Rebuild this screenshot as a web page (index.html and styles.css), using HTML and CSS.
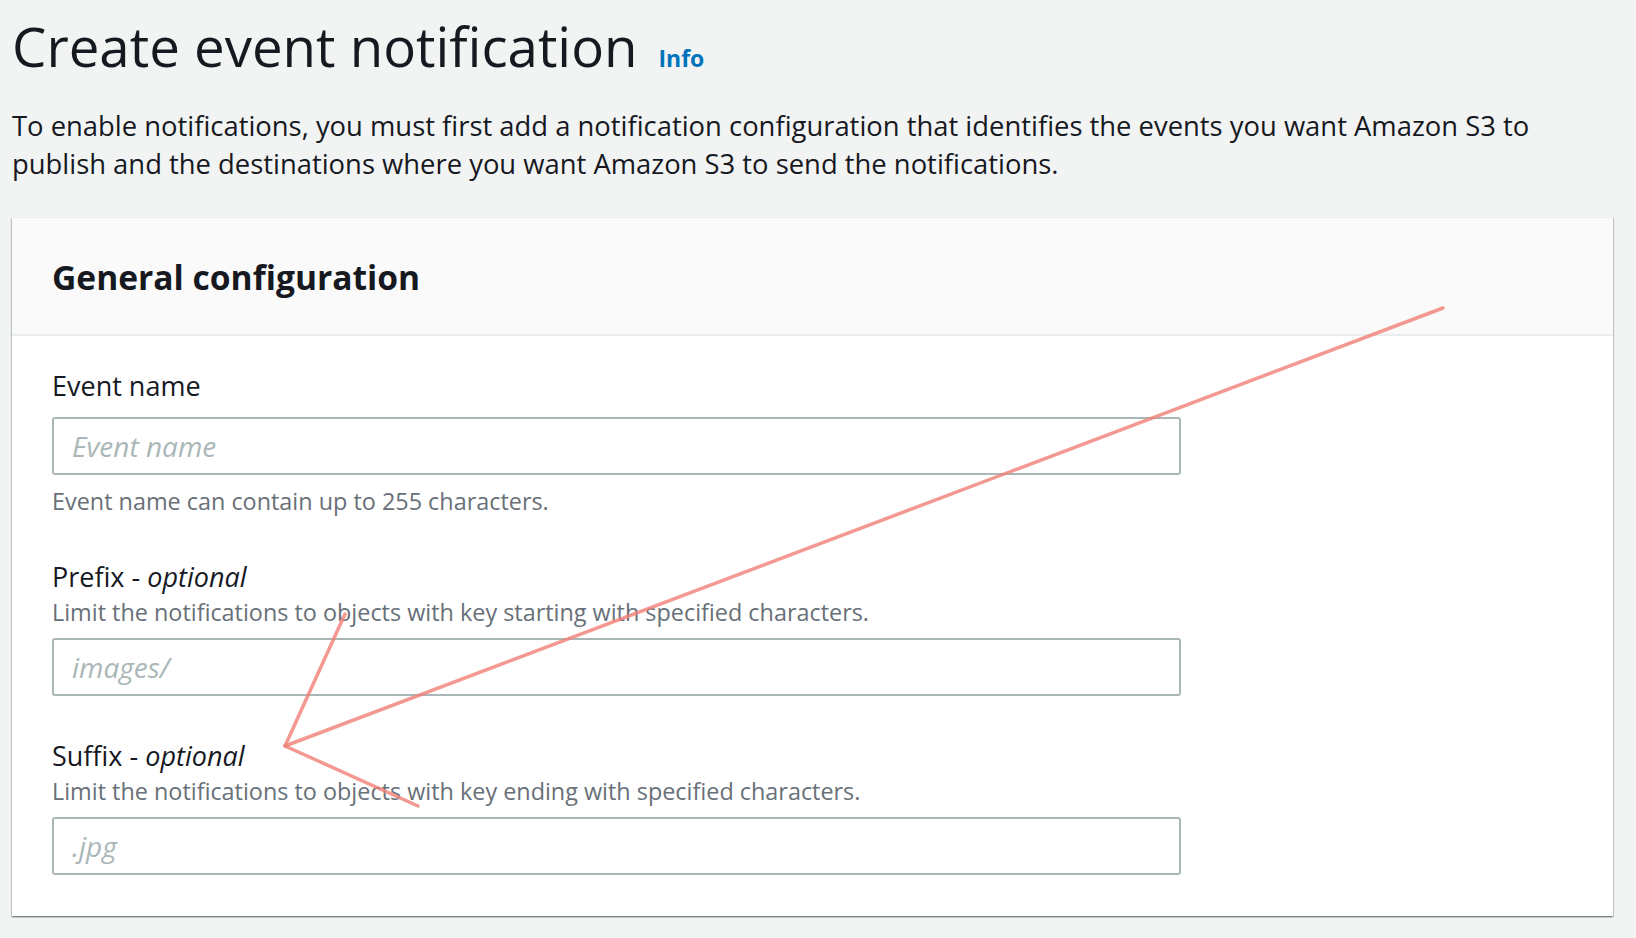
FILE: index.html
```html
<!DOCTYPE html>
<html lang="en">
<head>
<meta charset="utf-8">
<title>Create event notification</title>
<link rel="stylesheet" href="styles.css">
</head>
<body>
<main class="page">
  <header class="page-header">
    <h1 class="page-title">Create event notification<a class="info-link" href="#">Info</a></h1>
    <p class="page-desc">To enable notifications, you must first add a notification configuration that identifies the events you want Amazon S3 to publish and the destinations where you want Amazon S3 to send the notifications.</p>
  </header>

  <section class="card">
    <div class="card-header">
      <h2 class="card-title">General configuration</h2>
    </div>
    <div class="card-body">
      <div class="field">
        <label class="field-label" for="event-name">Event name</label>
        <input class="field-input field-input--spaced" id="event-name" type="text" placeholder="Event name">
        <p class="field-help">Event name can contain up to 255 characters.</p>
      </div>
      <div class="field">
        <label class="field-label" for="prefix">Prefix - <i>optional</i></label>
        <p class="field-desc">Limit the notifications to objects with key starting with specified characters.</p>
        <input class="field-input" id="prefix" type="text" placeholder="images/">
      </div>
      <div class="field">
        <label class="field-label" for="suffix">Suffix - <i>optional</i></label>
        <p class="field-desc">Limit the notifications to objects with key ending with specified characters.</p>
        <input class="field-input" id="suffix" type="text" placeholder=".jpg">
      </div>
    </div>
  </section>
</main>

<svg class="annotation" width="1636" height="938" viewBox="0 0 1636 938" aria-hidden="true">
  <g class="annotation-stroke">
    <line x1="1443" y1="308" x2="285" y2="746"/>
    <polyline points="345,614 285,746 418,806"/>
  </g>
</svg>
</body>
</html>
```
FILE: styles.css
```css
* {
  box-sizing: border-box;
}

html, body {
  margin: 0;
  padding: 0;
}

body {
  background: #f2f3f3;
  color: #16191f;
  font-family: "Open Sans", "Noto Sans", sans-serif;
  position: relative;
  min-height: 938px;
}

.page {
  padding: 13.5px 23px 0 12px;
}

.page-title {
  margin: 0;
  font-size: 54.6px;
  line-height: 64px;
  font-weight: 400;
  color: #16191f;
}

.info-link {
  margin-left: 21px;
  font-size: 23px;
  line-height: 0;
  font-weight: 700;
  color: #0073bb;
  text-decoration: none;
  vertical-align: baseline;
}

.page-desc {
  margin: 29.5px 0 0;
  font-size: 27.4px;
  line-height: 38.3px;
  color: #16191f;
}

.card {
  margin-top: 33.5px;
  background: #ffffff;
  border-top: 1px solid #eaeded;
  box-shadow: 0 1.5px 1.5px 0 rgba(0, 28, 36, 0.35), 1px 1px 1px 0 rgba(0, 28, 36, 0.15), -1px 1px 1px 0 rgba(0, 28, 36, 0.15);
}

.card-header {
  background: #fafafa;
  padding: 37px 40px 35px;
  border-bottom: 2px solid #eaeded;
}

.card-title {
  margin: 0;
  font-size: 33.6px;
  line-height: 44px;
  font-weight: 700;
  color: #16191f;
}

.card-body {
  display: flex;
  flex-direction: column;
  gap: 42px;
  padding: 31.5px 40px 41.5px;
}

.field {
  display: flex;
  flex-direction: column;
  align-items: flex-start;
}

.field-label {
  font-size: 27px;
  line-height: 36px;
  color: #16191f;
}

.field-label i {
  font-style: italic;
}

.field-desc,
.field-help {
  margin: 0;
  font-size: 23.4px;
  line-height: 32px;
  color: #687078;
}

.field-desc {
  margin-top: 1px;
}

.field-help {
  margin-top: 10px;
}

.field-input {
  display: block;
  width: 1129px;
  height: 58px;
  margin-top: 10px;
  padding: 0 18px;
  border: 2px solid #aab7b8;
  border-radius: 3px;
  background: #ffffff;
  font-family: "Open Sans", "Noto Sans", sans-serif;
  font-size: 28px;
  color: #16191f;
  outline: none;
}

.field-input--spaced {
  margin-top: 13px;
}

.field-input::placeholder {
  color: #aab7b8;
  font-style: italic;
  opacity: 1;
}

.annotation {
  position: absolute;
  left: 0;
  top: 0;
  pointer-events: none;
}

.annotation-stroke {
  fill: none;
  stroke: rgb(240, 128, 118);
  stroke-opacity: 0.8;
  stroke-width: 3.5;
  stroke-linecap: round;
  stroke-linejoin: round;
}
```
